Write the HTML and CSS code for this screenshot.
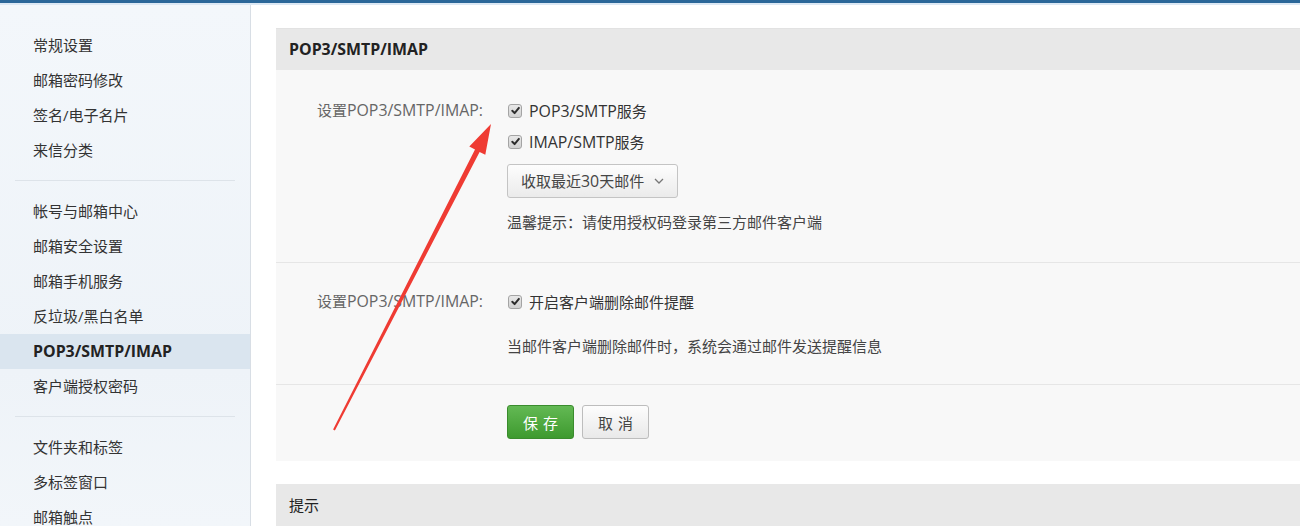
FILE: index.html
```html
<!DOCTYPE html>
<html lang="zh-CN">
<head>
<meta charset="utf-8">
<title>POP3/SMTP/IMAP 设置</title>
<link rel="stylesheet" href="styles.css">
</head>
<body>
<div class="topbar"></div>
<div class="layout">
  <nav class="sidebar">
    <ul class="group">
      <li>常规设置</li>
      <li>邮箱密码修改</li>
      <li>签名/电子名片</li>
      <li>来信分类</li>
    </ul>
    <ul class="group">
      <li>帐号与邮箱中心</li>
      <li>邮箱安全设置</li>
      <li>邮箱手机服务</li>
      <li>反垃圾/黑白名单</li>
      <li class="active"><span class="en">POP3/SMTP/IMAP</span></li>
      <li>客户端授权密码</li>
    </ul>
    <ul class="group">
      <li>文件夹和标签</li>
      <li>多标签窗口</li>
      <li>邮箱触点</li>
    </ul>
  </nav>
  <main class="main">
    <section class="panel">
      <div class="panel-head"><span class="en">POP3/SMTP/IMAP</span></div>
      <div class="panel-body">
        <div class="block block-first">
          <div class="label">设置<span class="en">POP3/SMTP/IMAP:</span></div>
          <div class="content">
            <div class="check-row"><span class="cb"><svg viewBox="0 0 13 13" width="13" height="13"><path d="M3.3 6.8 L5.6 9.1 L9.9 3.9" fill="none" stroke="#2e2e2e" stroke-width="2" stroke-linecap="round" stroke-linejoin="round"/></svg></span><span><span class="en">POP3/SMTP</span>服务</span></div>
            <div class="check-row"><span class="cb"><svg viewBox="0 0 13 13" width="13" height="13"><path d="M3.3 6.8 L5.6 9.1 L9.9 3.9" fill="none" stroke="#2e2e2e" stroke-width="2" stroke-linecap="round" stroke-linejoin="round"/></svg></span><span><span class="en">IMAP/SMTP</span>服务</span></div>
            <div class="select"><span>收取最近<span class="en">30</span>天邮件</span><svg class="chev" viewBox="0 0 10 6" width="10" height="6"><path d="M1 1 L5 5 L9 1" fill="none" stroke="#777" stroke-width="1.3"/></svg></div>
            <div class="hint">温馨提示：请使用授权码登录第三方邮件客户端</div>
          </div>
        </div>
        <div class="block block-second">
          <div class="label">设置<span class="en">POP3/SMTP/IMAP:</span></div>
          <div class="content">
            <div class="check-row"><span class="cb"><svg viewBox="0 0 13 13" width="13" height="13"><path d="M3.3 6.8 L5.6 9.1 L9.9 3.9" fill="none" stroke="#2e2e2e" stroke-width="2" stroke-linecap="round" stroke-linejoin="round"/></svg></span><span>开启客户端删除邮件提醒</span></div>
            <div class="desc">当邮件客户端删除邮件时，系统会通过邮件发送提醒信息</div>
          </div>
        </div>
        <div class="block block-actions">
          <div class="label"></div>
          <div class="content buttons">
            <button class="btn btn-save">保存</button>
            <button class="btn btn-cancel">取消</button>
          </div>
        </div>
      </div>
    </section>
    <section class="panel panel-tip">
      <div class="panel-head tip-head">提示</div>
    </section>
  </main>
</div>
<svg class="arrow" width="1300" height="526" viewBox="0 0 1300 526">
  <polygon points="491,124 485.3,154.8 479.6,151.9 334.9,430.5 333.1,429.5 475.0,149.5 469.3,146.6" fill="#ef3b33"/>
</svg>
</body>
</html>
```
FILE: styles.css
```css
html, body {
  margin: 0;
  padding: 0;
  height: 100%;
  overflow: hidden;
}
body {
  position: relative;
  font-family: "Open Sans", "Noto Sans CJK SC", sans-serif;
  font-size: 15px;
  color: #333;
  background: #fff;
}
.en {
  font-size: 15.9px;
}
.topbar {
  height: 3px;
  background: #2b6799;
  border-bottom: 2px solid #dce8f4;
}
.layout {
  display: flex;
  height: 521px;
}
.sidebar {
  width: 250px;
  flex: none;
  background: linear-gradient(#f3f7fb, #eef3f8 70%, #f2f6fa);
  border-right: 1px solid #d8dee5;
  padding-top: 23px;
}
.group {
  list-style: none;
  margin: 0 15px;
  padding: 0 0 12px;
  border-bottom: 1px solid #dde3e9;
  margin-bottom: 13px;
}
.group:last-child {
  border-bottom: none;
}
.group li {
  height: 35px;
  line-height: 35px;
  padding-left: 18px;
  color: #333;
  white-space: nowrap;
}
.group li.active {
  margin: 0 -15px;
  padding-left: 33px;
  background: #dae5ef;
  font-weight: bold;
  color: #222;
}
.main {
  flex: 1;
  min-width: 0;
  padding: 23px 0 0 25px;
  overflow: hidden;
}
.panel {
  width: 1100px;
}
.panel-head {
  height: 41px;
  line-height: 41px;
  background: #e8e8e8;
  border-top: 1px solid #e2e2e2;
  padding-left: 13px;
  font-weight: bold;
  color: #222;
}
.panel-body {
  background: #f8f8f8;
}
.block {
  display: grid;
  grid-template-columns: 207px 1fr;
  column-gap: 24px;
  border-bottom: 1px solid #e6e6e6;
}
.block-first {
  padding: 25px 0 27px;
}
.block-second {
  padding: 23px 0 25px;
}
.block-actions {
  padding: 20px 0 22px;
  border-bottom: none;
}
.label {
  text-align: right;
  color: #666;
  line-height: 31px;
  white-space: nowrap;
}
.check-row {
  display: flex;
  align-items: center;
  gap: 7px;
  height: 31px;
  padding-left: 1px;
  color: #333;
}
.cb {
  width: 12px;
  height: 12px;
  border: 1px solid #a4a4a4;
  border-radius: 3px;
  background: linear-gradient(#e8e8e8, #d2d2d2);
  display: flex;
  align-items: center;
  justify-content: center;
  overflow: hidden;
}
.cb svg {
  flex: none;
}
.select {
  display: inline-flex;
  align-items: center;
  gap: 10px;
  margin-top: 7px;
  height: 32px;
  padding: 0 13px;
  border: 1px solid #c4c4c4;
  border-radius: 3px;
  background: linear-gradient(#fdfdfd, #ebebeb);
  color: #444;
}
.hint {
  margin-top: 12px;
  line-height: 25px;
  color: #444;
}
.desc {
  margin-top: 17px;
  line-height: 25px;
  color: #444;
}
.buttons {
  display: flex;
  gap: 8px;
}
.btn {
  width: 67px;
  height: 34px;
  border-radius: 3px;
  font-family: inherit;
  font-size: 15px;
  letter-spacing: 5px;
  text-indent: 5px;
  padding: 0;
  cursor: pointer;
}
.btn-save {
  background: linear-gradient(#63b954, #3e9a2f);
  border: 1px solid #3a8c2d;
  color: #fff;
}
.btn-cancel {
  background: linear-gradient(#fdfdfd, #e9e9e9);
  border: 1px solid #bdbdbd;
  color: #444;
}
.panel-tip {
  margin-top: 23px;
}
.tip-head {
  height: 42px;
  line-height: 42px;
  border-top: none;
  font-weight: normal;
  color: #222;
}
.arrow {
  position: absolute;
  top: 0;
  left: 0;
  pointer-events: none;
}
```
